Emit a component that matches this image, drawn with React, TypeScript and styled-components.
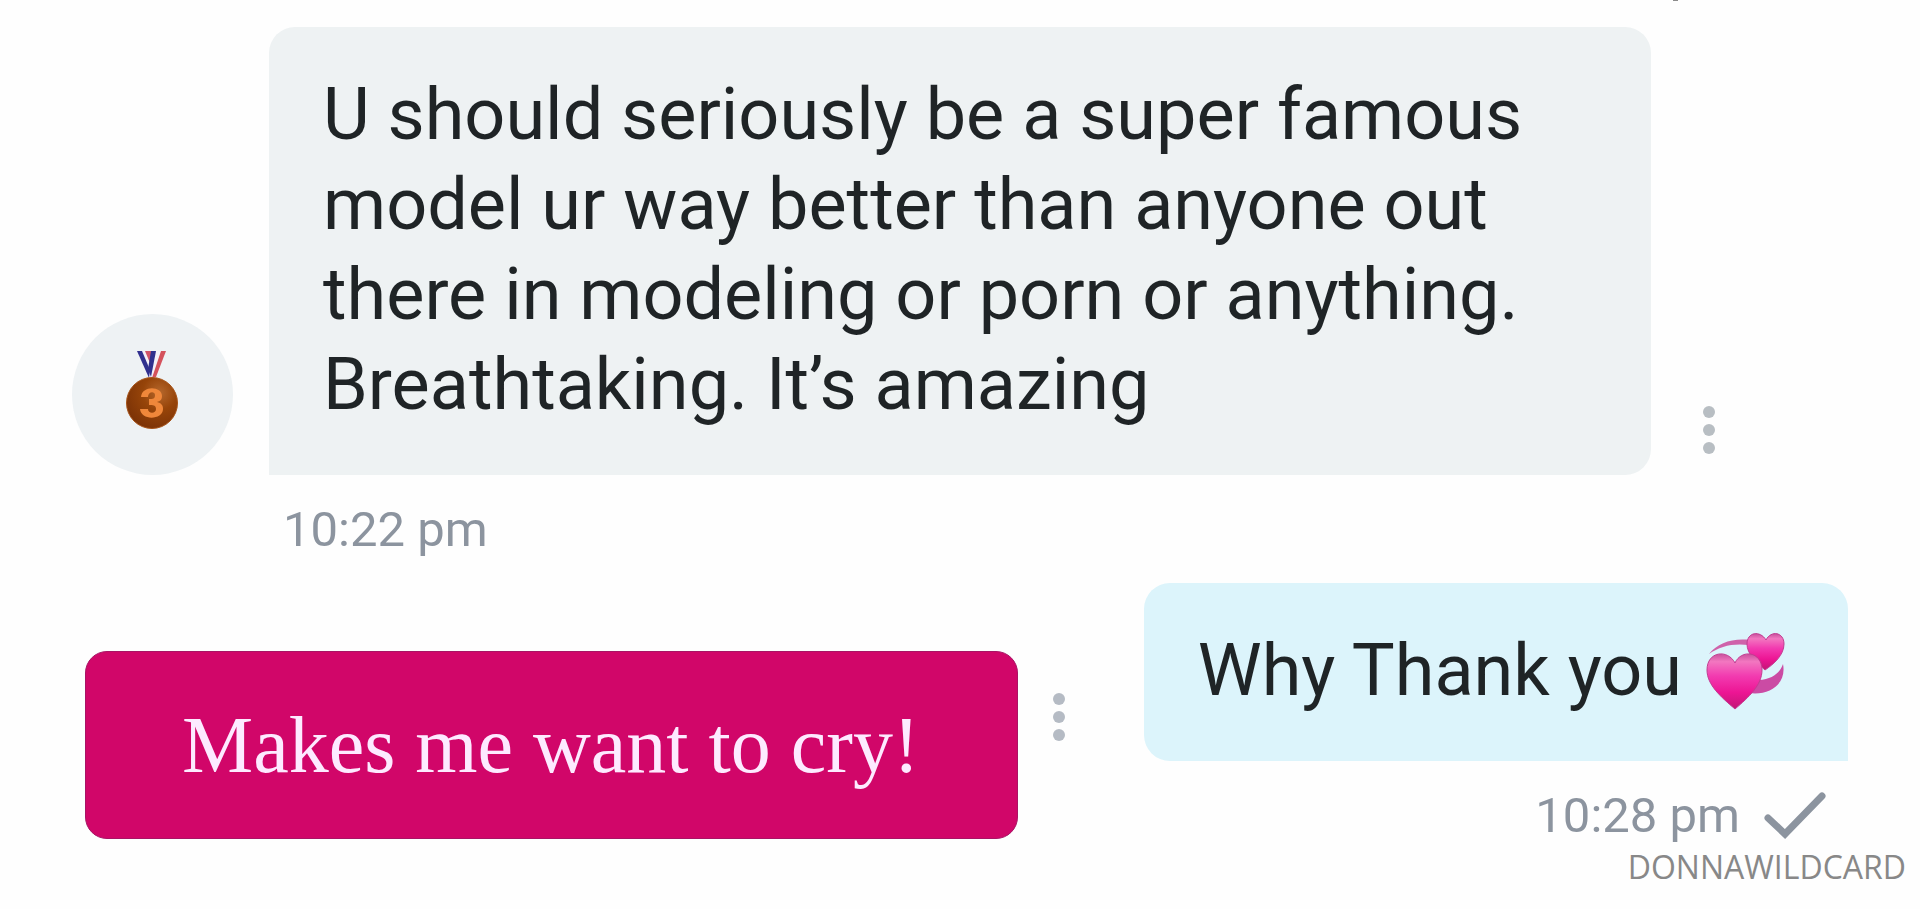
import React from "react";
import styled, { createGlobalStyle } from "styled-components";

const GlobalStyle = createGlobalStyle`
  *, *::before, *::after { box-sizing: border-box; }
  body {
    margin: 0;
    background: #fefefe;
    font-family: Roboto, "Liberation Sans", sans-serif;
    color: #1f2426;
  }
`;

const Chat = styled.main`
  position: relative;
  display: flex;
  flex-direction: column;
  gap: 23px;
  padding: 27px 72px 0;
`;

const TopMark = styled.span`
  position: absolute;
  top: 0;
  right: 242px;
  width: 5px;
  height: 1px;
  background: #8b8b8b;
`;

const Received = styled.section`
  display: grid;
  grid-template-columns: 161px minmax(0, 1fr) 12px;
  column-gap: 36px;
  align-items: end;
  padding-right: 133px;
`;

const Avatar = styled.div`
  display: flex;
  align-items: center;
  justify-content: center;
  width: 161px;
  height: 161px;
  padding: 0 2px 10px 0;
  border-radius: 50%;
  background: #eef2f4;
`;

const Bubble = styled.p<{ $own?: boolean }>`
  display: flex;
  align-items: center;
  gap: 24px;
  margin: 0;
  padding: 43px ${(p) => (p.$own ? 62 : 54)}px 45px 54px;
  border-radius: ${(p) => (p.$own ? "26px 26px 0 26px" : "26px 26px 26px 0")};
  background: ${(p) => (p.$own ? "#dcf4fb" : "#eef2f3")};
  font-size: 72px;
  line-height: 90px;
`;

const ReceivedBubble = styled(Bubble)`
  margin-right: 16px;
`;

const MoreButton = styled.button<{ $tone: string; $margin: string }>`
  display: flex;
  flex-direction: column;
  gap: 6px;
  width: 12px;
  margin: ${(p) => p.$margin};
  padding: 0;
  border: 0;
  background: none;
  color: ${(p) => p.$tone};
  cursor: pointer;
`;

const Dot = styled.span`
  width: 12px;
  height: 12px;
  border-radius: 50%;
  background: currentColor;
`;

const Meta = styled.div`
  display: flex;
  align-items: center;
  gap: 24px;
  margin-top: 25px;
  font-size: 49px;
  line-height: 60px;
  color: #8c949f;
`;

const ReceivedMeta = styled(Meta)`
  grid-column: 2;
  padding-left: 14px;
`;

const SentMeta = styled(Meta)`
  justify-content: flex-end;
  padding-right: 22px;
`;

const Reply = styled.section`
  display: flex;
  justify-content: space-between;
  align-items: flex-start;
`;

const CaptionGroup = styled.div`
  display: flex;
  align-items: flex-start;
  gap: 35px;
  padding: 68px 0 0 13px;
`;

const Caption = styled.div`
  padding: 48px 97px 48px 96px;
  border: 1px solid #a81465;
  border-radius: 22px;
  background: #d10669;
  color: #fdeaff;
  font-family: "Liberation Serif", "Times New Roman", serif;
  font-size: 80px;
  line-height: 90px;
`;

const Signature = styled.footer`
  margin: -23px -58px 0;
  text-align: right;
  font-family: "Open Sans", "Noto Sans", sans-serif;
  font-size: 32px;
  line-height: 42px;
  color: #888888;
`;

function More({ tone, margin }: { tone: string; margin: string }) {
  return (
    <MoreButton type="button" aria-label="More options" $tone={tone} $margin={margin}>
      <Dot />
      <Dot />
      <Dot />
    </MoreButton>
  );
}

function Medal() {
  return (
    <svg width="54" height="80" viewBox="0 0 54 80" role="img" aria-label="Third place medal">
      <defs>
        <radialGradient id="bronze" cx="0.65" cy="0.3" r="0.75">
          <stop offset="0" stopColor="#b5672c" />
          <stop offset="0.45" stopColor="#964409" />
          <stop offset="1" stopColor="#7b3206" />
        </radialGradient>
      </defs>
      <path d="M12 1h29L30 28h-7z" fill="#f4f1f8" />
      <path d="M20 1h7l-2 12z" fill="#d05468" />
      <path d="M36 1h5L31 27l-4 1z" fill="#d4525c" />
      <path d="M12 1h5l8 19-1 8z" fill="#30308e" />
      <path d="M26 1h5l-5 26-3-8z" fill="#30308e" />
      <circle cx="27" cy="53" r="25.5" fill="url(#bronze)" stroke="#a75419" />
      <path
        d="M16 47c1-12 21-11 21-1 0 4-2 5-5 6 4 1 6 3 6 7 0 11-22 12-23 0h8c0 5 8 5 8 0 0-4-3-4-7-4v-6c4 0 6 0 6-4s-7-4-7 2z"
        fill="#ef873a"
      />
    </svg>
  );
}

function Hearts() {
  return (
    <svg width="80" height="78" viewBox="0 0 80 78" role="img" aria-label="Revolving hearts">
      <defs>
        <linearGradient id="heart" x1="0" y1="0" x2="0" y2="1">
          <stop offset="0" stopColor="#c8509c" />
          <stop offset="0.14" stopColor="#f277c0" />
          <stop offset="0.4" stopColor="#f23bb0" />
          <stop offset="0.7" stopColor="#ed1594" />
          <stop offset="1" stopColor="#c21675" />
        </linearGradient>
      </defs>
      <path d="M3 22C12 11 26 6 44 8l-1 5C27 11 14 14 3 22z" fill="#cf62aa" />
      <path d="M77 32c4 20-14 32-34 29l10-13c13-1 21-7 24-16z" fill="#cb4ba4" />
      <path
        d="M59 38C50 30 41 22 41 12 41 0 54-2 60 8c5-10 18-8 18 4 0 11-10 20-19 26z"
        fill="url(#heart)"
        stroke="#c23c91"
      />
      <path
        d="M29 77C15 65 1 53 1 38c0-19 21-21 28-7 6-14 27-12 27 7 0 15-13 27-27 39z"
        fill="url(#heart)"
        stroke="#c23c91"
      />
    </svg>
  );
}

function Check() {
  return (
    <svg width="62" height="48" viewBox="0 0 62 48" role="img" aria-label="Sent">
      <path
        d="M4 26L21 42 58 4"
        fill="none"
        stroke="currentColor"
        strokeWidth="7"
        strokeLinecap="round"
        strokeLinejoin="miter"
      />
    </svg>
  );
}

export default function App() {
  return (
    <>
      <GlobalStyle />
      <Chat>
        <TopMark />
        <Received>
          <Avatar>
            <Medal />
          </Avatar>
          <ReceivedBubble>
            U should seriously be a super famous model ur way better than anyone out there in modeling or
            porn or anything. Breathtaking. It’s amazing
          </ReceivedBubble>
          <More tone="#b8bec3" margin="0 0 21px" />
          <ReceivedMeta>
            <time>10:22 pm</time>
          </ReceivedMeta>
        </Received>
        <Reply>
          <CaptionGroup>
            <Caption>Makes me want to cry!</Caption>
            <More tone="#b5bbc4" margin="42px 0 0" />
          </CaptionGroup>
          <div>
            <Bubble $own>
              Why Thank you
              <Hearts />
            </Bubble>
            <SentMeta>
              <time>10:28 pm</time>
              <Check />
            </SentMeta>
          </div>
        </Reply>
        <Signature>DONNAWILDCARD</Signature>
      </Chat>
    </>
  );
}
